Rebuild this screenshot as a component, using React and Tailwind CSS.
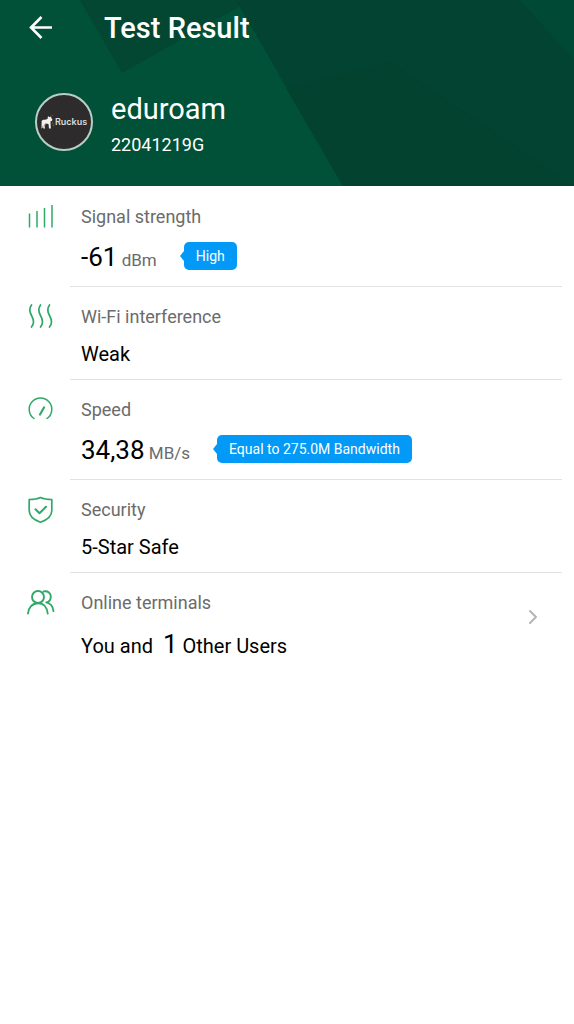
import { ChevronRight } from "lucide-react";

const iconProps = {
  viewBox: "0 0 28 28",
  fill: "none",
  stroke: "currentColor",
  strokeWidth: 1.5,
  strokeLinecap: "round",
  strokeLinejoin: "round",
  "aria-hidden": true,
  className: "w-7 h-7",
};

function SignalIcon() {
  return (
    <svg {...iconProps} strokeLinecap="butt">
      <path d="M2.500 10.500v14M10 8v16.500M17.500 5v19.500M25 2v22.500" />
    </svg>
  );
}

function WavesIcon() {
  return (
    <svg {...iconProps} strokeWidth="1.700">
      <path d="M4.500 2C2 5.500 2.200 8.500 4.500 12.500S7.500 20.500 4.500 24" />
      <path d="M13.500 2C11 5.500 11.200 8.500 13.500 12.500S16.500 20.500 13.500 24" />
      <path d="M22.500 2C20 5.500 20.200 8.500 22.500 12.500S25.500 20.500 22.500 24" />
    </svg>
  );
}

function SpeedIcon() {
  return (
    <svg {...iconProps}>
      <path d="M7 22.500a11.300 11.300 0 1 1 13 0" />
      <path d="M13 18.500l4-7" strokeWidth="2.200" />
    </svg>
  );
}

function ShieldIcon() {
  return (
    <svg {...iconProps} strokeWidth="1.700">
      <path d="M13.500 1.500C10 3.200 6.500 3.500 2.200 3.500v11c0 6 4.800 9.500 11.300 11.700C20 24 24.800 20.500 24.800 14.500v-11C20.500 3.500 17 3.200 13.500 1.500z" />
      <path d="M8.500 13.300l4 4 6.500-6.500" strokeWidth="2" />
    </svg>
  );
}

function UsersIcon() {
  return (
    <svg {...iconProps} strokeWidth="1.900">
      <circle cx="11" cy="8" r="6" />
      <path d="M1 24.500c0.500-6 4.300-10.300 10-10.300S20.200 18.500 20.700 24.500" />
      <path d="M16.500 2.500c4.700-1 7.300 2 7.300 5.300 0 3.200-2 5.200-4.500 5.600 4.300 1 6.800 4.600 7.100 8.600" />
    </svg>
  );
}

function Badge({ children }) {
  return (
    <span className="relative self-start flex items-center h-7 ml-[27px] px-3 rounded-[5px] bg-[#0399f6] text-white text-[14px] leading-5">
      <svg
        viewBox="0 0 4 10"
        fill="currentColor"
        aria-hidden="true"
        className="absolute right-full top-[9px] w-1 h-[10px] text-[#0399f6]"
      >
        <path d="M4 0L0 5l4 5z" />
      </svg>
      {children}
    </span>
  );
}

function Row({ icon, label, last, children }) {
  return (
    <li className="flex">
      <div className="w-[70px] shrink-0 pt-4 pl-[27px] text-[#2fa968]">{icon}</div>
      <div
        className={`flex-1 min-w-0 pl-[11px] pt-[18px] pb-[13px] ${
          last ? "" : "border-b border-[#e2e2e2]"
        }`}
      >
        <h2 className="mb-[13px] text-[18px] leading-6 text-[#6b6b6b]">{label}</h2>
        {children}
      </div>
    </li>
  );
}

// Big number with its unit and a coloured hint
function Metric({ value, unit, hint }) {
  return (
    <div className="flex items-end">
      <p className="text-[26px] leading-[31px] text-black">
        {value}
        <span className="text-[17px] leading-none text-[#6b6b6b]"> {unit}</span>
      </p>
      <Badge>{hint}</Badge>
    </div>
  );
}

function RuckusLogo() {
  return (
    <div className="flex items-center justify-center w-[58px] h-[58px] shrink-0 rounded-full border-2 border-[#b9cfc5] bg-[#2d2b2c]">
      <svg viewBox="0 0 14 16" aria-hidden="true" className="w-[14px] h-4">
        <path
          d="M0.500 7.500C1 6 2 5.500 4 5.800L6.500 5 7 2l1.300 1.200L10 2.500l0.500 2L11.500 5.500 10.800 7 9.500 7.200 9.800 14.500H8L7.500 10 4.500 9.500 3.500 11l0.500 3.500H2.300L2 11 1.500 14H0.500L1 10z"
          fill="#f3f1ec"
        />
        <path d="M0.500 9v5.500M4.500 10l-1 2" stroke="#a88b66" strokeWidth="0.800" />
        <path d="M10.500 2l1.500-1M11.500 7.500l1 5" stroke="#6d5f52" strokeWidth="0.800" />
      </svg>
      <span className="font-['Inter',sans-serif] text-[9px] leading-3 font-semibold text-[#dcdcdc]">
        Ruckus
      </span>
    </div>
  );
}

function Header() {
  return (
    <header className="relative bg-[#005137] text-white">
      <svg
        viewBox="0 0 574 186"
        preserveAspectRatio="none"
        aria-hidden="true"
        className="absolute inset-0 w-full h-full"
      >
        <path d="M80 0l42 73L240 6V0z" fill="#034632" />
        <path d="M236 0l107 186h231V0z" fill="#024331" />
        <path d="M286 88L390 62l184 124H343z" fill="#02422f" />
        <path d="M520 0h54v60z" fill="#004935" />
      </svg>
      <div className="relative">
        <div className="flex items-center h-14 pl-[27px]">
          <button type="button" aria-label="Back" className="w-7 h-7 cursor-pointer">
            <svg
              viewBox="0 0 28 28"
              fill="none"
              stroke="currentColor"
              strokeWidth="2.600"
              aria-hidden="true"
              className="w-7 h-7"
            >
              <path d="M25 13.500H4M14.500 3L4 13.500 14.500 24" />
            </svg>
          </button>
          <h1 className="ml-[49px] text-[29px] leading-8 font-medium">Test Result</h1>
        </div>
        <div className="flex items-start pt-[37px] pb-[35px] pl-[35px]">
          <RuckusLogo />
          <div className="-mt-0.5 -mb-2 ml-[18px]">
            <p className="text-[29px] leading-9">eduroam</p>
            <p className="mt-1 text-[18px] leading-7">22041219G</p>
          </div>
        </div>
      </div>
    </header>
  );
}

function App() {
  return (
    <div className="min-h-screen bg-white font-['Roboto',sans-serif]">
      <Header />
      <ul className="pt-px pr-3">
        <Row icon={<SignalIcon />} label="Signal strength">
          <Metric value="-61" unit="dBm" hint="High" />
        </Row>
        <Row icon={<WavesIcon />} label="Wi-Fi interference">
          <p className="text-[20px] leading-6 text-black">Weak</p>
        </Row>
        <Row icon={<SpeedIcon />} label="Speed">
          <Metric value="34,38" unit="MB/s" hint="Equal to 275.0M Bandwidth" />
        </Row>
        <Row icon={<ShieldIcon />} label="Security">
          <p className="text-[20px] leading-6 text-black">5-Star Safe</p>
        </Row>
        <li>
          <a href="#terminals" className="flex items-start">
            <ul className="flex-1">
              <Row icon={<UsersIcon />} label="Online terminals" last>
                <p className="text-[20px] leading-9 text-black">
                  You and&nbsp; <span className="text-[26px] leading-none">1</span> Other Users
                </p>
              </Row>
            </ul>
            <ChevronRight className="w-6 h-6 mt-8 mr-[17px] text-[#b5b5b5]" aria-hidden="true" />
          </a>
        </li>
      </ul>
    </div>
  );
}

export default App;
